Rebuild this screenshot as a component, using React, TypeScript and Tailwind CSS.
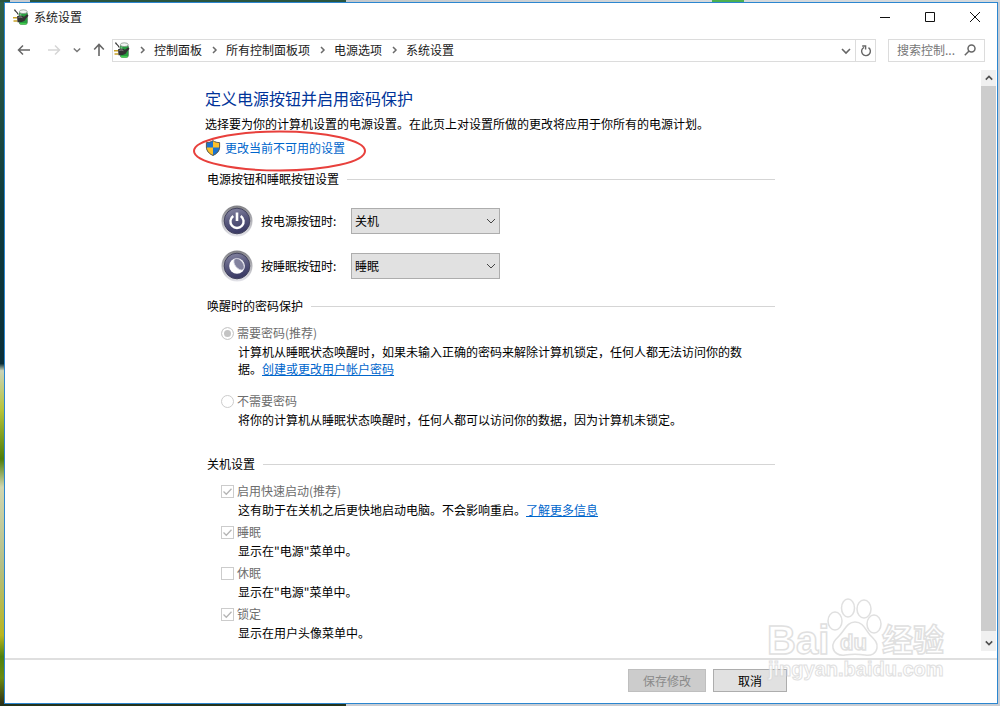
import React from 'react';

const PowerPlanIcon = () => (
  <svg viewBox="0 0 16 16" className="h-4 w-4 shrink-0" aria-hidden="true">
    <rect x="6" y="2.500" width="8.500" height="13" rx="2.500" fill="#27a03f" stroke="#5f7a66" strokeWidth="0.6" />
    <path d="M7.500 5.500v4" stroke="#a5ecae" strokeWidth="1.600" />
    <path d="M7 14.800h6.500" stroke="#46d352" strokeWidth="1.400" />
    <ellipse cx="10.300" cy="2.700" rx="3.900" ry="1.900" fill="#f1f5f2" stroke="#7d8a81" strokeWidth="0.7" />
    <path d="M1.500.5c.6 2 3 2.500 3.500 5" stroke="#3c3c3c" strokeWidth="1.200" fill="none" />
    <path d="M0 8.800h4M.5 12h4" stroke="#c9a227" strokeWidth="1.500" />
    <path d="M4 7.200l3-.8c2.200-.2 3.200.9 4 1.400l3.300-2.600 1.200 1.600-2.800 3.300c-.6 1.800-2 2.700-4 2.800L4.500 13.200z" fill="#333" />
    <path d="M5.500 8.400c1.500-.6 2.800-.5 3.800.2" stroke="#a0a0a0" strokeWidth="1" fill="none" />
  </svg>
);

const Separator = () => (
  <svg viewBox="0 0 24 10" className="h-2.5 w-6 shrink-0" fill="none" stroke="#6b6b6b" strokeWidth="1.5" aria-hidden="true">
    <path d="M11 2l3 3-3 3" />
  </svg>
);

const ChevronDown = ({ className }: { className: string }) => (
  <svg viewBox="0 0 10 10" className={className} fill="none" stroke="currentColor" aria-hidden="true">
    <path d="M1 3l4 4 4-4" />
  </svg>
);

const Shield = () => (
  <svg viewBox="0 0 16 16" className="h-4 w-4 shrink-0" aria-hidden="true">
    <path d="M8 .5C6 2 3.500 2.500 1.300 2.500V7c0 4 3 7 6.700 8.600z" fill="#1a73d0" />
    <path d="M8 .5c2 1.500 4.500 2 6.700 2V7c0 4-3 7-6.700 8.600z" fill="#fbc02a" />
    <path d="M1.300 7.500H8v8.100C4.500 14.200 1.500 11.500 1.300 7.500z" fill="#fbc02a" />
    <path d="M8 7.500h6.700c-.2 4-3.200 6.700-6.700 8.100z" fill="#1a73d0" />
    <path
      d="M8 .7c2 1.400 4.400 1.900 6.600 1.900V7c0 4-3 6.900-6.600 8.400C4.400 13.900 1.400 11 1.400 7V2.600C3.600 2.600 6 2.100 8 .7z"
      fill="none"
      stroke="#5b5a50"
      strokeWidth="1"
    />
  </svg>
);

const RoundButton = ({ id, children }: { id: string; children: React.ReactNode }) => (
  <svg viewBox="0 0 32 32" className="h-8 w-8 shrink-0" aria-hidden="true">
    <defs>
      <linearGradient id={`${id}-rim`} x1="0" y1="0" x2="0" y2="1">
        <stop offset="0" stopColor="#7f7f84" />
        <stop offset="1" stopColor="#e4e4ea" />
      </linearGradient>
      <linearGradient id={`${id}-face`} x1="0" y1="0" x2="0.3" y2="1">
        <stop offset="0" stopColor="#8d8da8" />
        <stop offset="0.5" stopColor="#5c5c80" />
        <stop offset="1" stopColor="#3c3c66" />
      </linearGradient>
    </defs>
    <circle cx="16" cy="16" r="15.500" fill={`url(#${id}-rim)`} />
    <circle cx="16" cy="16" r="12.800" fill={`url(#${id}-face)`} stroke="#44445f" strokeWidth="1" />
    {children}
  </svg>
);

const Legend = ({ children }: { children: React.ReactNode }) => (
  <h2 className="flex items-center gap-2 leading-5">
    {children}
    <span className="h-px flex-1 bg-[#d5d5d5]" />
  </h2>
);

type ActionProps = {
  id: string;
  label: string;
  value: string;
  icon: React.ReactNode;
};

const ActionRow = ({ id, label, value, icon }: ActionProps) => (
  <div className="flex h-[45px] items-center">
    {icon}
    <label htmlFor={id} className="ml-2 w-[90px]">
      {label}
    </label>
    <div className="relative">
      <select
        id={id}
        className="block h-[26px] w-[149px] appearance-none border border-[#adadad] bg-[#e1e1e1] px-[3px] text-black"
      >
        <option>{value}</option>
      </select>
      <ChevronDown className="pointer-events-none absolute top-2 right-1 h-2.5 w-2.5 text-[#444]" />
    </div>
  </div>
);

type ShutdownOption = {
  id: string;
  label: string;
  checked: boolean;
  text: string;
  link?: string;
};

const shutdownOptions: ShutdownOption[] = [
  {
    id: 'fast-startup',
    label: '启用快速启动(推荐)',
    checked: true,
    text: '这有助于在关机之后更快地启动电脑。不会影响重启。',
    link: '了解更多信息',
  },
  { id: 'sleep', label: '睡眠', checked: true, text: '显示在"电源"菜单中。' },
  { id: 'hibernate', label: '休眠', checked: false, text: '显示在"电源"菜单中。' },
  { id: 'lock', label: '锁定', checked: true, text: '显示在用户头像菜单中。' },
];

const CheckOption = ({ id, label, checked, text, link }: ShutdownOption) => (
  <div>
    <div className="flex h-4 items-center gap-[3px] text-[#6d6d6d]">
      <span className="relative flex">
        <input
          id={id}
          type="checkbox"
          defaultChecked={checked}
          disabled
          className="peer h-[13px] w-[13px] appearance-none border border-[#cccccc] bg-white"
        />
        <svg
          viewBox="0 0 13 13"
          className="pointer-events-none absolute inset-0 hidden h-[13px] w-[13px] peer-checked:block"
          fill="none"
          stroke="#b5b5b5"
          strokeWidth="1.3"
          aria-hidden="true"
        >
          <path d="M2.500 6.500l2.800 2.800 5.200-5.600" />
        </svg>
      </span>
      <label htmlFor={id}>{label}</label>
    </div>
    <p className="mt-0.5 pl-[17px] leading-[17px]">
      {text}
      {link && (
        <a href="#more" className="text-[#0066cc] underline">
          {link}
        </a>
      )}
    </p>
  </div>
);

const RadioOption = ({
  id,
  label,
  checked,
  children,
}: {
  id: string;
  label: string;
  checked: boolean;
  children: React.ReactNode;
}) => (
  <div>
    <div className="flex h-4 items-center gap-[3px] text-[#6d6d6d]">
      <input
        id={id}
        type="radio"
        name="wake-password"
        defaultChecked={checked}
        disabled
        className="h-[13px] w-[13px] appearance-none rounded-full border border-[#cccccc] bg-white checked:bg-[#c4c4c4] checked:shadow-[inset_0_0_0_2px_white]"
      />
      <label htmlFor={id}>{label}</label>
    </div>
    <p className="mt-0.5 max-w-[525px] pl-[17px] leading-[17px]">{children}</p>
  </div>
);

const Desktop = () => (
  <div className="absolute inset-0 bg-[#c9cdd3]" aria-hidden="true">
    <div className="absolute inset-y-0 left-0 w-1 bg-[linear-gradient(to_bottom,#2f5f46_0%,#0d3a3c_30%,#0a2f38_51.500%,#c9d3b8_52.500%,#b8c43a_58%,#4d7d0a_65%,#d0d6b0_69%,#b4bf86_80%,#b8b520_90%,#4d8010_93%,#6a8a10_96%,#2b2a18_100%)]" />
    <div className="absolute top-0 left-0 h-0.5 w-full bg-[linear-gradient(to_right,#2a5540_0,#2a5540_10px,#c8ccd0_10px,#c8ccd0_30px,#2a5540_30px,#2a5540_346px,#c3c8cc_346px,#d5d9dc_712px,#4caf50_712px,#4caf50_744px,#d5d9dc_744px)]" />
    <div className="absolute bottom-0 left-0 h-0.5 w-[346px] bg-[#24331c]" />
  </div>
);

const TitleBar = () => (
  <header className="flex h-7 items-center pl-2">
    <PowerPlanIcon />
    <h1 className="ml-[5px] flex-1 text-[#222]">系统设置</h1>
    <div className="flex">
      <button type="button" aria-label="最小化" className="flex h-7 w-[45px] items-center justify-center">
        <svg viewBox="0 0 10 10" className="h-2.5 w-2.5" stroke="#111" fill="none">
          <path d="M0 5.500h10" />
        </svg>
      </button>
      <button type="button" aria-label="最大化" className="flex h-7 w-[45px] items-center justify-center">
        <svg viewBox="0 0 10 10" className="h-2.5 w-2.5" stroke="#111" fill="none">
          <path d="M.5.5h9v9h-9z" />
        </svg>
      </button>
      <button type="button" aria-label="关闭" className="flex h-7 w-[45px] items-center justify-center">
        <svg viewBox="0 0 10 10" className="h-2.5 w-2.5" stroke="#111" fill="none">
          <path d="M0 0l10 10M10 0L0 10" />
        </svg>
      </button>
    </div>
  </header>
);

const crumbs = ['控制面板', '所有控制面板项', '电源选项', '系统设置'];

const NavBar = () => (
  <nav className="mt-2 flex h-[23px] items-center pr-3">
    <div className="flex w-[107px] items-center pb-0.5 pl-3">
      <button type="button" aria-label="后退">
        <svg viewBox="0 0 14 12" className="h-3 w-3.5" fill="none" stroke="#666" strokeWidth="1.5">
          <path d="M13 6H1.500M6 1.500L1.500 6 6 10.500" />
        </svg>
      </button>
      <button type="button" aria-label="前进" className="ml-4">
        <svg viewBox="0 0 14 12" className="h-3 w-3.5" fill="none" stroke="#d6d6d6" strokeWidth="1.5">
          <path d="M1 6h11.500M8 1.500L12.500 6 8 10.500" />
        </svg>
      </button>
      <button type="button" aria-label="最近的位置" className="ml-3">
        <ChevronDown className="h-2 w-2 stroke-[1.8] text-[#777]" />
      </button>
      <button type="button" aria-label="上移" className="ml-3">
        <svg viewBox="0 0 12 14" className="h-3.5 w-3" fill="none" stroke="#666" strokeWidth="1.6">
          <path d="M6 13V1.500M1.200 6.500L6 1.500l4.800 5" />
        </svg>
      </button>
    </div>
    <div className="flex h-full flex-1 items-center border border-[#dcdcdc] pl-px">
      <div className="flex items-center pb-0.5">
        <PowerPlanIcon />
        {crumbs.map((crumb) => (
          <React.Fragment key={crumb}>
            <Separator />
            <a href="#crumb" className="whitespace-nowrap text-[#1a1a1a]">
              {crumb}
            </a>
          </React.Fragment>
        ))}
      </div>
      <button type="button" aria-label="以前的位置" className="ml-auto px-1">
        <ChevronDown className="h-2.5 w-2.5 stroke-[1.6] text-[#666]" />
      </button>
      <button
        type="button"
        aria-label="刷新"
        className="flex h-full w-5 items-center justify-center border-l border-[#dcdcdc]"
      >
        <svg viewBox="0 0 12 12" className="h-3 w-3" fill="none" stroke="#666" strokeWidth="1.4">
          <path d="M8.500 2.600A4.400 4.400 0 1 1 4 2.300" />
          <path d="M2.200 1h3.400v3.600" />
        </svg>
      </button>
    </div>
    <div className="ml-3 flex h-full w-[97px] items-center border border-[#dcdcdc] pr-2 pb-px pl-2">
      <input
        type="text"
        aria-label="搜索控制面板"
        placeholder="搜索控制..."
        className="min-w-0 flex-1 outline-none placeholder:text-[#767676]"
      />
      <svg viewBox="0 0 12 12" className="h-3 w-3 shrink-0" fill="none" stroke="#666" strokeWidth="1.5" aria-hidden="true">
        <circle cx="7.500" cy="4.500" r="3.500" />
        <path d="M5 7L.8 11.200" />
      </svg>
    </div>
  </nav>
);

const ScrollBar = () => (
  <div className="flex w-[15px] flex-col bg-[#f0f0f0]" aria-hidden="true">
    <div className="flex h-4 items-center justify-center">
      <ChevronDown className="h-2 w-2 rotate-180 stroke-2 text-[#505050]" />
    </div>
    <div className="flex-1 bg-[#cdcdcd]" />
    <div className="flex h-5 items-end justify-center pb-1">
      <ChevronDown className="h-2 w-2 stroke-2 text-[#505050]" />
    </div>
  </div>
);

const Watermark = () => (
  <svg
    viewBox="0 0 186 90"
    className="pointer-events-none absolute right-[50px] bottom-5 h-[90px] w-[186px] font-['Liberation_Sans','Noto_Sans_CJK_SC',sans-serif] font-bold opacity-80"
    fill="#fff"
    stroke="#d9d9d9"
    strokeWidth="1.5"
    aria-hidden="true"
  >
    <text x="3" y="58" fontSize="40">Bai</text>
    <ellipse cx="71" cy="25" rx="7" ry="9" />
    <ellipse cx="84" cy="12" rx="6.500" ry="9" />
    <ellipse cx="100" cy="13" rx="7" ry="9" />
    <ellipse cx="110" cy="28" rx="7" ry="9" />
    <path d="M91 26c8 0 10 7 15 13 5 5 8 8 7 13-1 6-6 8-12 7-7-1-13-1-20 0-6 1-11-2-12-7s2-8 6-12c6-6 8-14 16-14z" />
    <text x="76" y="54" fontSize="22">du</text>
    <text x="118" y="55" fontSize="31">经验</text>
    <text x="4" y="80" fontSize="20" strokeWidth="1">jingyan.baidu.com</text>
  </svg>
);

const App = () => {
  return (
    <div className="relative h-screen min-h-[700px] overflow-hidden pt-0.5 pr-0.5 pb-0.5 pl-1 font-['Noto_Sans_CJK_SC',sans-serif] text-xs text-black">
      <Desktop />
      <div className="relative flex h-full flex-col border border-[#2b86d0] bg-white">
        <TitleBar />
        <NavBar />
        <div className="mt-2 mb-[7px] flex min-h-0 flex-1 pr-px">
          <main className="min-w-0 flex-1 pt-4 pl-[200px]">
            <div className="w-full max-w-[570px]">
              <h2 className="text-base leading-6 text-[#003399]">定义电源按钮并启用密码保护</h2>
              <p className="mt-1 leading-5 whitespace-nowrap">
                选择要为你的计算机设置的电源设置。在此页上对设置所做的更改将应用于你所有的电源计划。
              </p>
              <div className="relative mt-1 flex w-fit items-center leading-5">
                <Shield />
                <a href="#unavailable" className="ml-1 text-[#0066cc]">
                  更改当前不可用的设置
                </a>
                {/* hand-drawn marker around the link */}
                <svg
                  viewBox="0 0 174 42"
                  className="pointer-events-none absolute -top-2 -left-3 h-[42px] w-[174px]"
                  fill="none"
                  stroke="#e8403c"
                  strokeWidth="2"
                  aria-hidden="true"
                >
                  <ellipse cx="86.500" cy="21" rx="85.500" ry="19.500" />
                </svg>
              </div>

              <section className="mt-[11px] pl-0.5">
                <Legend>电源按钮和睡眠按钮设置</Legend>
                <div className="mt-[9px] pl-3.5">
                  <ActionRow
                    id="power-button"
                    label="按电源按钮时:"
                    value="关机"
                    icon={
                      <RoundButton id="power">
                        <path d="M12.300 11a6.600 6.600 0 1 0 7.400 0" fill="none" stroke="#fff" strokeWidth="2.400" />
                        <path d="M16 7.500v8.500" stroke="#fff" strokeWidth="2.600" />
                      </RoundButton>
                    }
                  />
                  <ActionRow
                    id="sleep-button"
                    label="按睡眠按钮时:"
                    value="睡眠"
                    icon={
                      <RoundButton id="moon">
                        <circle cx="16" cy="16" r="7.800" fill="#fff" />
                        <ellipse
                          cx="18"
                          cy="14.200"
                          rx="3.900"
                          ry="6.600"
                          transform="rotate(-38 18 14.200)"
                          fill="#82829e"
                          stroke="#c9c9d8"
                          strokeWidth="0.800"
                        />
                      </RoundButton>
                    }
                  />
                </div>
              </section>

              <section className="mt-2 pl-0.5">
                <Legend>唤醒时的密码保护</Legend>
                <div className="mt-[9px] flex flex-col gap-4 pl-3.5">
                  <RadioOption id="need-password" label="需要密码(推荐)" checked>
                    计算机从睡眠状态唤醒时，如果未输入正确的密码来解除计算机锁定，任何人都无法访问你的数据。
                    <a href="#password" className="text-[#0066cc] underline">
                      创建或更改用户帐户密码
                    </a>
                  </RadioOption>
                  <RadioOption id="no-password" label="不需要密码" checked={false}>
                    将你的计算机从睡眠状态唤醒时，任何人都可以访问你的数据，因为计算机未锁定。
                  </RadioOption>
                </div>
              </section>

              <section className="mt-[26px] pl-0.5">
                <Legend>关机设置</Legend>
                <div className="mt-[9px] flex flex-col gap-1.5 pl-3.5">
                  {shutdownOptions.map((option) => (
                    <CheckOption key={option.id} {...option} />
                  ))}
                </div>
              </section>
            </div>
          </main>
          <ScrollBar />
        </div>
        <footer className="flex h-[45px] items-center justify-end gap-[7px] border-t-2 border-[#dfdfdf] pr-[210px] pb-0.5">
          <button type="button" disabled className="h-[23px] w-[78px] border border-[#bfbfbf] bg-[#cccccc] text-[#8a8a8a]">
            保存修改
          </button>
          <button type="button" className="h-[23px] w-[74px] border border-[#adadad] bg-[#e1e1e1]">
            取消
          </button>
        </footer>
      </div>
      <Watermark />
    </div>
  );
};

export default App;
